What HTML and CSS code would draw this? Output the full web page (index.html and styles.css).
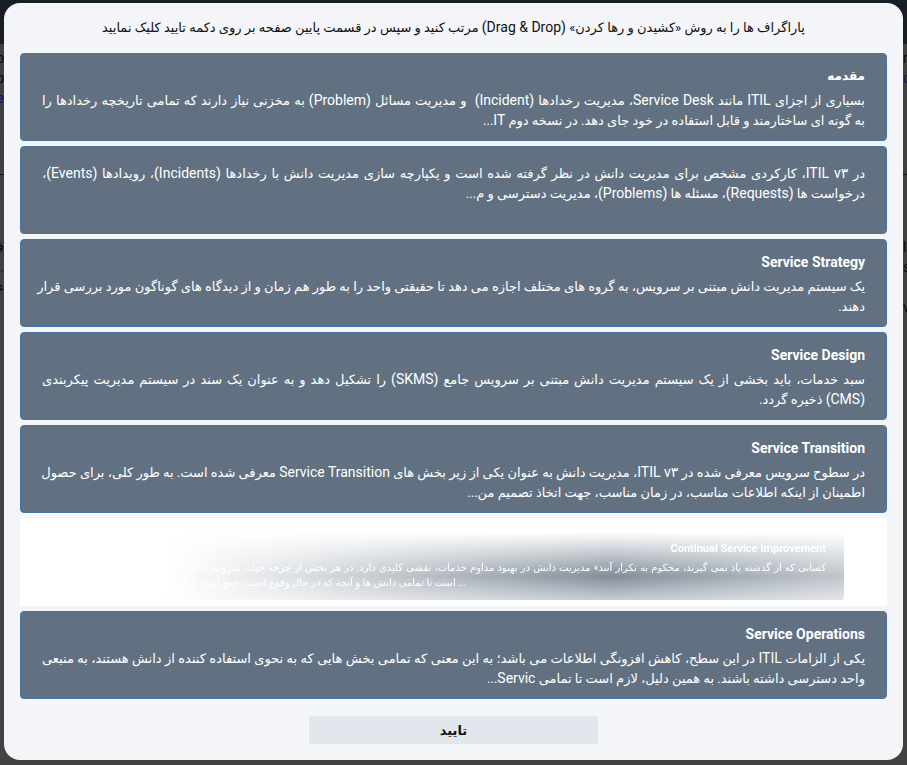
FILE: index.html
```html
<!DOCTYPE html>
<html lang="fa" dir="rtl">
<head>
<meta charset="utf-8">
<meta name="viewport" content="width=device-width, initial-scale=1">
<title>مرتب سازی پاراگراف ها</title>
<link rel="stylesheet" href="styles.css">
</head>
<body>
<div class="edge edge-left" aria-hidden="true">
  <span>p</span><span>p</span><span class="link">e</span>
  <hr>
  <span>ف</span><span class="link">.</span><span>ء</span>
</div>
<div class="edge edge-right" aria-hidden="true">
  <span>n</span><span class="link">o</span>
  <hr>
  <span>l</span><span>s</span><span></span><span>v</span>
</div>
<main class="dialog">
  <p class="hint">پاراگراف ها را به روش «کشیدن و رها کردن» <bdi class="en">(Drag &amp; Drop)</bdi> مرتب کنید و سپس در قسمت پایین صفحه بر روی دکمه تایید کلیک نمایید</p>
  <ul class="list">
    <li class="card">
      <h2 class="title title-fa">مقدمه</h2>
      <p class="text">بسیاری از اجزای <span class="en">ITIL</span> مانند <span class="en">Service Desk</span>، مدیریت رخدادها <span class="en">(Incident)</span> &nbsp;و مدیریت مسائل <span class="en">(Problem)</span> به مخزنی نیاز دارند که تمامی تاریخچه رخدادها را</p>
      <p class="text text-end">به گونه ای ساختارمند و قابل استفاده در خود جای دهد. در نسخه دوم <span class="en">IT</span>...</p>
    </li>
    <li class="card">
      <p class="text">در <span class="en">ITIL v۳</span>، کارکردی مشخص برای مدیریت دانش در نظر گرفته شده است و یکپارچه سازی مدیریت دانش با رخدادها <span class="en">(Incidents)</span>، رویدادها <span class="en">(Events)</span>،</p>
      <p class="text text-end">درخواست ها <span class="en">(Requests)</span>، مسئله ها <span class="en">(Problems)</span>، مدیریت دسترسی و م...</p>
    </li>
    <li class="card">
      <h2 class="title">Service Strategy</h2>
      <p class="text">یک سیستم مدیریت دانش مبتنی بر سرویس، به گروه های مختلف اجازه می دهد تا حقیقتی واحد را به طور هم زمان و از دیدگاه های گوناگون مورد بررسی قرار</p>
      <p class="text text-end">دهند.</p>
    </li>
    <li class="card">
      <h2 class="title">Service Design</h2>
      <p class="text">سبد خدمات، باید بخشی از یک سیستم مدیریت دانش مبتنی بر سرویس جامع <span class="en">(SKMS)</span> را تشکیل دهد و به عنوان یک سند در سیستم مدیریت پیکربندی</p>
      <p class="text text-end"><span class="en">(CMS)</span> ذخیره گردد.</p>
    </li>
    <li class="card">
      <h2 class="title">Service Transition</h2>
      <p class="text">در سطوح سرویس معرفی شده در <span class="en">ITIL v۳</span>، مدیریت دانش به عنوان یکی از زیر بخش های <span class="en">Service Transition</span> معرفی شده است. به طور کلی، برای حصول</p>
      <p class="text text-end">اطمینان از اینکه اطلاعات مناسب، در زمان مناسب، جهت اتخاذ تصمیم من...</p>
    </li>
    <li class="slot">
      <div class="ghost">
        <h2 class="title">Continual Service Improvement</h2>
        <p class="text">کسانی که از گذشته یاد نمی گیرند، محکوم به تکرار آنند» مدیریت دانش در بهبود مداوم خدمات، نقشی کلیدی دارد. در هر بخش از چرخه حیات سرویس، لازم»</p>
        <p class="text ghost-end">... است تا تمامی دانش ها و آنچه که در حال وقوع است، جمع آوری گردد</p>
      </div>
    </li>
    <li class="card">
      <h2 class="title">Service Operations</h2>
      <p class="text">یکی از الزامات <span class="en">ITIL</span> در این سطح، کاهش افزونگی اطلاعات می باشد؛ به این معنی که تمامی بخش هایی که به نحوی استفاده کننده از دانش هستند، به منبعی</p>
      <p class="text text-end">واحد دسترسی داشته باشند. به همین دلیل، لازم است تا تمامی <span class="en">Servic</span>...</p>
    </li>
  </ul>
  <button class="confirm" type="button">تایید</button>
</main>
</body>
</html>
```
FILE: styles.css
```css
* { box-sizing: border-box; }

body {
  position: relative;
  margin: 0;
  padding: 3px 4px 5px;
  min-height: 100vh;
  background: linear-gradient(#15202a 0, #1a1e24 6px, #1a1e24 44px, #404040 44px, #424242 100%);
  font-family: Roboto, "DejaVu Sans", sans-serif;
  font-size: 13px;
  color: #111;
}

/* Slivers of the dimmed page on both sides of the dialog */
.edge {
  position: absolute;
  top: 48px;
  bottom: 0;
  width: 4px;
  overflow: hidden;
  display: flex;
  flex-direction: column;
  font-size: 14px;
  line-height: 20px;
  color: #0a0a0a;
}

.edge-left { left: 0; direction: ltr; align-items: flex-end; }
.edge-right { right: 0; direction: ltr; align-items: flex-start; }
.edge span { min-height: 20px; }
.edge .link { color: #10106a; }

.edge hr {
  width: 100%;
  margin: 66px 0 62px;
  border: 0;
  border-top: 1px solid #111;
}

.edge-right hr { margin-top: 86px; }

.dialog {
  position: relative;
  display: flex;
  flex-direction: column;
  align-items: center;
  padding: 14px 16px 16px;
  border-radius: 16px;
  background: #f3f5f8;
}

.hint {
  margin: 0 0 14px;
  line-height: 22px;
  text-align: center;
}

.en { font-size: 14px; line-height: 16px; }

.list {
  align-self: stretch;
  display: flex;
  flex-direction: column;
  gap: 5px;
  margin: 0 0 17px;
  padding: 0;
  list-style: none;
}

.card {
  min-height: 88px;
  padding: 12px 21px 5px;
  border: 1px solid #4975a3;
  border-radius: 4px;
  background: #627181;
  color: #fff;
}

.title {
  margin: 0 0 4px;
  font-size: 14px;
  line-height: 21px;
  font-weight: 700;
}

.title-fa { font-size: 12px; }

.text {
  margin: 0;
  line-height: 20px;
  text-align: justify;
  text-align-last: justify;
  white-space: nowrap;
}

.text:first-child { margin-top: 5px; }
.text-end { text-align-last: right; }

.slot {
  display: flex;
  min-height: 88px;
  padding: 14px 43px 6px 140px;
  background: #fff;
}

.ghost {
  flex: 1;
  min-width: 0;
  padding: 8px 18px 0;
  border-radius: 3px;
  background: #627181;
  color: #fff;
  font-size: 10px;
  mask-image:
    linear-gradient(to right, transparent 1%, rgba(0, 0, 0, .25) 22%, rgba(0, 0, 0, .8) 66%, rgba(0, 0, 0, .4)),
    linear-gradient(transparent, #000 65%, rgba(0, 0, 0, .45));
  mask-composite: intersect;
}

.ghost .title { margin-bottom: 3px; font-size: 11px; line-height: 17px; }
.ghost .text { line-height: 15px; }
.ghost .ghost-end { text-align-last: left; }

.confirm {
  width: 33.33%;
  height: 28px;
  padding: 0;
  border: 0;
  background: #e2e7ee;
  color: #111;
  font: 700 13px Roboto, "DejaVu Sans", sans-serif;
}
```
